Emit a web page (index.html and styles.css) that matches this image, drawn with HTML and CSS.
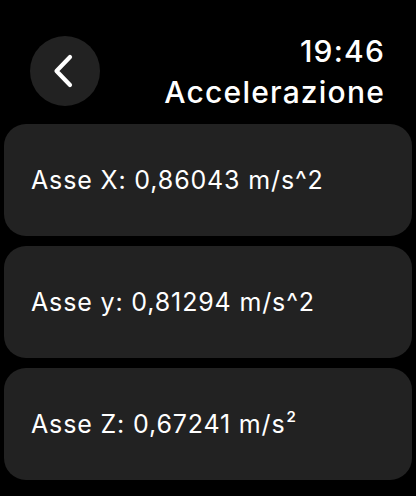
FILE: index.html
```html
<!DOCTYPE html>
<html lang="it">
<head>
<meta charset="utf-8">
<link rel="stylesheet" href="styles.css">
</head>
<body>
<div class="screen">
  <header class="header">
    <button class="back" aria-label="Indietro">
      <svg width="70" height="70" viewBox="0 0 70 70"><path d="M40 21 L26.5 35 L40 49" fill="none" stroke="#fff" stroke-width="4.2" stroke-linecap="round" stroke-linejoin="round"/></svg>
    </button>
    <div class="titles">
      <div class="time">19:46</div>
      <div class="title">Accelerazione</div>
    </div>
  </header>
  <main class="list">
    <div class="card">Asse X: 0,86043 m/s^2</div>
    <div class="card">Asse y: 0,81294 m/s^2</div>
    <div class="card">Asse Z: 0,67241 m/s<span class="sup">2</span></div>
  </main>
</div>
</body>
</html>
```

FILE: styles.css
```css
html, body {
  margin: 0;
  padding: 0;
  background: #000;
}
body {
  font-family: Inter, "Noto Sans", sans-serif;
  color: #fff;
}
.screen {
  width: 416px;
  height: 496px;
  overflow: hidden;
}
.header {
  display: flex;
  justify-content: space-between;
  align-items: flex-start;
  padding: 36px 32px 0 30px;
  height: 88px;
}
.back {
  width: 70px;
  height: 70px;
  border-radius: 50%;
  background: #222222;
  border: 0;
  padding: 0;
  display: block;
}
.back svg { display: block; }
.titles {
  text-align: right;
  font-size: 30px;
  font-weight: 500;
  line-height: 41px;
  letter-spacing: 1.2px;
  margin-top: -5px;
  margin-right: -1px;
}
.list {
  display: flex;
  flex-direction: column;
  gap: 10px;
  padding: 0 4px;
}
.card {
  height: 112px;
  background: #222222;
  border-radius: 22px;
  display: flex;
  align-items: center;
  padding-left: 27px;
  font-size: 25px;
  font-weight: 400;
  letter-spacing: 0.85px;
  white-space: pre;
}
.sup {
  font-size: 15px;
  font-weight: 600;
  align-self: center;
  margin-top: -16px;
  margin-left: 1px;
}
```
